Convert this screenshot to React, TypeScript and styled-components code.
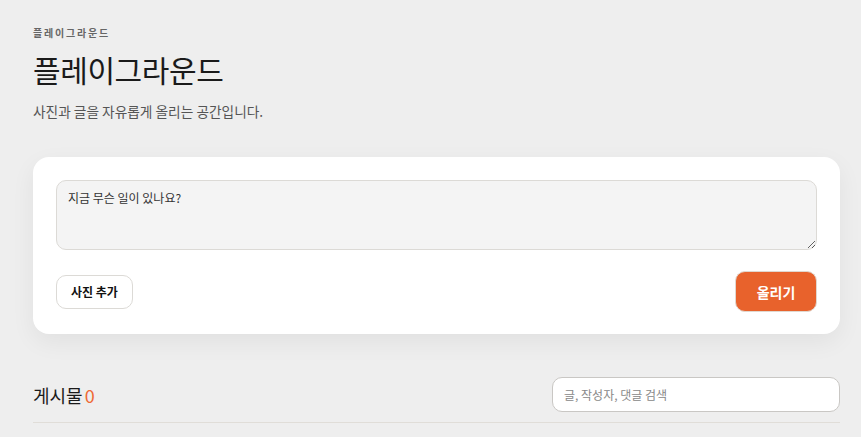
import React from "react";
import styled, { createGlobalStyle } from "styled-components";

const Global = createGlobalStyle`
  html, body { margin: 0; padding: 0; background: #eeeeee; }
  body { font-family: "Noto Sans CJK KR", "Noto Sans", sans-serif; color: #1a1a1a; }
  * { box-sizing: border-box; }
`;

const Page = styled.main`
  padding: 26px 21px 0 33px;
  display: flex;
  flex-direction: column;
`;

const Eyebrow = styled.div`
  font-size: 10px;
  font-weight: 700;
  letter-spacing: 1.8px;
  color: #666;
  line-height: 14px;
`;

const Title = styled.h1`
  margin: 9px 0 0;
  font-size: 30px;
  font-weight: 400;
  line-height: 40px;
  color: #1a1a1a;
  letter-spacing: -0.4px;
`;

const Subtitle = styled.p`
  margin: 12px 0 0;
  font-size: 13.7px;
  line-height: 20px;
  color: #555;
`;

const Card = styled.section`
  margin-top: 36px;
  background: #fff;
  border-radius: 16px;
  padding: 23px 23px 22px;
  box-shadow: 0 8px 24px rgba(0, 0, 0, 0.06);
  display: flex;
  flex-direction: column;
  gap: 21px;
`;

const TextArea = styled.textarea`
  width: 100%;
  height: 70px;
  resize: vertical;
  background: #f4f4f4;
  border: 1px solid #dcdad6;
  border-radius: 10px;
  padding: 8px 11px;
  font-family: inherit;
  font-size: 12px;
  line-height: 18px;
  color: #222;
  outline: none;
  display: block;
  &::placeholder { color: #333; }
`;

const Actions = styled.div`
  display: flex;
  align-items: center;
  justify-content: space-between;
`;

const GhostButton = styled.button`
  height: 34px;
  padding: 0 14px;
  background: #fff;
  border: 1px solid #dcdad6;
  border-radius: 10px;
  font-family: inherit;
  font-size: 12px;
  font-weight: 700;
  color: #111;
`;

const PrimaryButton = styled.button`
  height: 41px;
  width: 82px;
  background: #e8622c;
  border: 1px solid #e0d8d0;
  border-radius: 10px;
  font-family: inherit;
  font-size: 14px;
  font-weight: 700;
  color: #fff;
`;

const FeedHeader = styled.div`
  margin-top: 43px;
  display: flex;
  align-items: center;
  justify-content: space-between;
  padding-bottom: 10px;
  border-bottom: 1px solid #e0ddd8;
`;

const FeedTitle = styled.h2`
  margin: 0;
  font-size: 18px;
  font-weight: 400;
  color: #1a1a1a;
  display: flex;
  gap: 2px;
`;

const Count = styled.span`
  color: #ef6a35;
`;

const Search = styled.input`
  width: 288px;
  height: 35px;
  border: 1px solid #c9c7c4;
  border-radius: 10px;
  background: #fff;
  padding: 0 11px;
  font-family: inherit;
  font-size: 12px;
  outline: none;
  &::placeholder { color: #888; }
`;

export default function App() {
  return (
    <>
      <Global />
      <Page>
        <Eyebrow>플레이그라운드</Eyebrow>
        <Title>플레이그라운드</Title>
        <Subtitle>사진과 글을 자유롭게 올리는 공간입니다.</Subtitle>
        <Card>
          <TextArea placeholder="지금 무슨 일이 있나요?" />
          <Actions>
            <GhostButton>사진 추가</GhostButton>
            <PrimaryButton>올리기</PrimaryButton>
          </Actions>
        </Card>
        <FeedHeader>
          <FeedTitle>
            게시물<Count>0</Count>
          </FeedTitle>
          <Search placeholder="글, 작성자, 댓글 검색" />
        </FeedHeader>
      </Page>
    </>
  );
}
